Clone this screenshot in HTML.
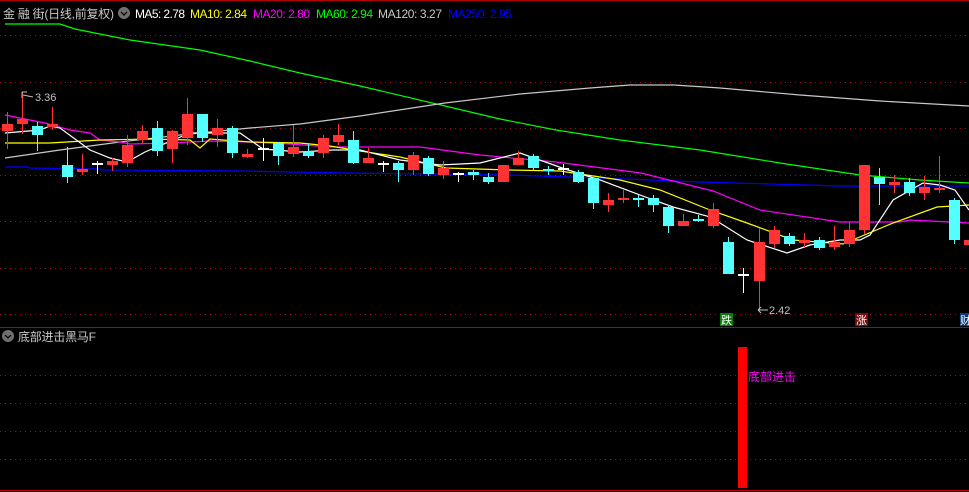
<!DOCTYPE html>
<html><head><meta charset="utf-8"><style>
html,body{margin:0;padding:0;background:#000;width:969px;height:492px;overflow:hidden}
svg{display:block}
text{font-family:"Liberation Sans","Noto Sans CJK SC",sans-serif}
</style></head><body>
<svg id="s" width="969" height="492" viewBox="0 0 969 492" xmlns="http://www.w3.org/2000/svg" shape-rendering="crispEdges">
<rect width="969" height="492" fill="#000"/>
<line x1="0" y1="0.5" x2="969" y2="0.5" stroke="#b00000"/>
<g stroke="#a01010" stroke-dasharray="1 4">
<line x1="0" y1="35.5" x2="969" y2="35.5"/>
<line x1="0" y1="82.5" x2="969" y2="82.5"/>
<line x1="0" y1="128.5" x2="969" y2="128.5"/>
<line x1="0" y1="175.5" x2="969" y2="175.5"/>
<line x1="0" y1="221.5" x2="969" y2="221.5"/>
<line x1="0" y1="268.5" x2="969" y2="268.5"/>
<line x1="0" y1="314.5" x2="969" y2="314.5"/>
<line x1="0" y1="375.5" x2="969" y2="375.5"/>
<line x1="0" y1="403.5" x2="969" y2="403.5"/>
<line x1="0" y1="431.5" x2="969" y2="431.5"/>
<line x1="0" y1="459.5" x2="969" y2="459.5"/>
</g>
<line x1="0" y1="327.5" x2="969" y2="327.5" stroke="#c00000"/>
<line x1="0" y1="490.5" x2="969" y2="490.5" stroke="#c00000"/>
<g fill="none" stroke-width="1.2" shape-rendering="auto">
<polyline stroke="#00ff00" points="5,24 60,24 75,29 130,40 200,50 250,61 300,73 360,86 445,106 500,119 556,130 620,140 700,150 780,163 860,175 920,180 969,183"/>
<polyline stroke="#c8c8c8" points="5,158 60,150 120,142 180,135 250,128 300,124 360,116 445,103 520,94 590,88 630,85 674,85 720,88 800,95 880,101 969,106"/>
<polyline stroke="#0000ff" points="5,167 28,167 30,168 100,169 103,170 240,171 345,173 509,175 600,178 700,182 840,186 969,186"/>
<polyline stroke="#ff00ff" points="5,115 45,123 70,130 90,133 100,140 120,142 130,144 170,143 210,141 250,142 290,144 330,147 420,147 480,155 556,162 641,173 713,191 760,210 840,222 900,222 910,220 930,221 969,223"/>
<polyline stroke="#ffff00" points="5,143 50,143 100,140 150,139 190,140 200,148 210,139 250,142 300,143 330,146 360,151 400,157 446,168 509,170 560,171 620,180 660,190 710,210 747,223 793,240 843,244 893,223 937,207 969,205"/>
<polyline stroke="#ffffff" points="5,133 40,130 50,126 60,128 90,150 110,158 127,162 145,152 190,133 240,133 263,149 300,152 333,150 360,150 400,160 440,165 480,163 520,153 565,169 600,180 640,195 673,207 707,216 720,223 747,240 787,253 810,245 840,240 860,240 870,235 893,200 923,183 940,185 955,190 969,210"/>
</g>
<g id="c"></g>
<g fill="#c0c0c0" font-size="11">
<text x="35" y="101">3.36</text>
<text x="769" y="314">2.42</text>
</g>
<g stroke="#c0c0c0" fill="none" shape-rendering="auto">
<path d="M22 92 L22 98 M22 92 L27 92 M23 95 L33 97"/>
<path d="M758 310 L768 310 M758 310 L761 307 M758 310 L761 313"/>
</g>
<rect x="720" y="313" width="13" height="13" fill="#0a7a0a"/>
<text x="721" y="324" font-size="11" fill="#fff">跌</text>
<rect x="855" y="313" width="13" height="13" fill="#7a0a0a"/>
<text x="856" y="324" font-size="11" fill="#fff">涨</text>
<rect x="960" y="313" width="9" height="13" fill="#0a3a7a"/>
<text x="960" y="324" font-size="11" fill="#fff">财</text>
<rect x="738" y="347" width="9" height="141" fill="#ff0000"/>
<text x="748" y="381" font-size="12" fill="#ff00ff">底部进击</text>
<g font-size="12">
<text x="3" y="18" fill="#c8c8c8" textLength="111" lengthAdjust="spacing">金 融 街(日线,前复权)</text>
<circle cx="124" cy="13" r="6" fill="#707070"/>
<path d="M121 12 L124 15 L127 12" stroke="#000" fill="none" stroke-width="1.3" shape-rendering="auto"/>
<text x="135" y="18" fill="#ffffff" textLength="50" lengthAdjust="spacing">MA5: 2.78</text>
<text x="190" y="18" fill="#ffff00" textLength="57" lengthAdjust="spacing">MA10: 2.84</text>
<text x="253" y="18" fill="#ff00ff" textLength="57" lengthAdjust="spacing">MA20: 2.80</text>
<text x="316" y="18" fill="#00ff00" textLength="57" lengthAdjust="spacing">MA60: 2.94</text>
<text x="378" y="18" fill="#c8c8c8" textLength="64" lengthAdjust="spacing">MA120: 3.27</text>
<text x="448" y="18" fill="#0000ff" textLength="64" lengthAdjust="spacing">MA250: 2.95</text>
<circle cx="8" cy="336" r="6" fill="#707070"/>
<path d="M5 335 L8 338 L11 335" stroke="#000" fill="none" stroke-width="1.3" shape-rendering="auto"/>
<text x="18" y="341" fill="#c8c8c8" textLength="78" lengthAdjust="spacing">底部进击黑马F</text>
</g>
</svg>
<script>
var d=[
"r 124 131 112 149","r 119 124 92 134","c 126 135 122 151","r 124 127 107 130","c 165 177 147 183","r 169 172 154 175","w 163 163 161 174","r 161 165 158 171","r 145 163 135 167","r 131 140 125 143",
"c 128 151 121 156","r 131 149 130 163","r 114 138 98 145","c 114 138 114 142","r 128 135 119 147","c 128 153 126 158","r 154 157 149 158","w 148 148 138 161","c 143 156 142 165","r 147 154 125 157",
"c 151 156 143 158","r 138 153 135 158","r 135 142 124 145","c 140 163 131 164","r 158 163 148 163","w 163 163 161 172","c 163 170 161 182","r 155 170 152 175","c 158 174 156 176","r 168 175 161 179",
"w 173 173 172 182","c 172 175 170 180","c 177 182 173 184","r 165 182 165 182","r 158 165 151 165","c 156 168 154 170","c 169 171 166 175","w 168 168 164 175","c 172 182 170 183","c 178 203 178 209",
"r 200 205 193 212","r 198 200 190 203","c 198 200 195 207","c 198 205 195 212","c 207 226 205 233","r 221 226 214 226","c 219 221 215 222","r 209 226 203 228","c 242 274 237 274","w 274 274 268 293",
"r 242 281 228 310","r 230 244 226 248","c 236 244 233 246","r 240 243 233 247","c 240 248 237 250","r 242 247 226 250","r 230 244 222 247","r 165 230 165 234","c 177 184 168 205","r 182 185 175 193",
"c 182 193 178 196","r 187 193 176 200","r 188 190 156 193","c 200 240 198 244","r 240 245 235 250"];
var g=document.getElementById('c'),h="";
d.forEach(function(s,i){var p=s.split(" "),t=p[0],a=+p[1],b=+p[2],w1=+p[3],w2=+p[4];
var x=Math.round(7+15.03*i);var col=t=="r"?"#ff3333":t=="c"?"#54ffff":"#ffffff";
h+='<rect x="'+x+'" y="'+w1+'" width="1" height="'+Math.max(1,w2-w1)+'" fill="'+col+'"/>';
h+='<rect x="'+(x-5)+'" y="'+a+'" width="11" height="'+Math.max(2,b-a)+'" fill="'+col+'"/>';});
g.innerHTML=h;
</script>
</body></html>
